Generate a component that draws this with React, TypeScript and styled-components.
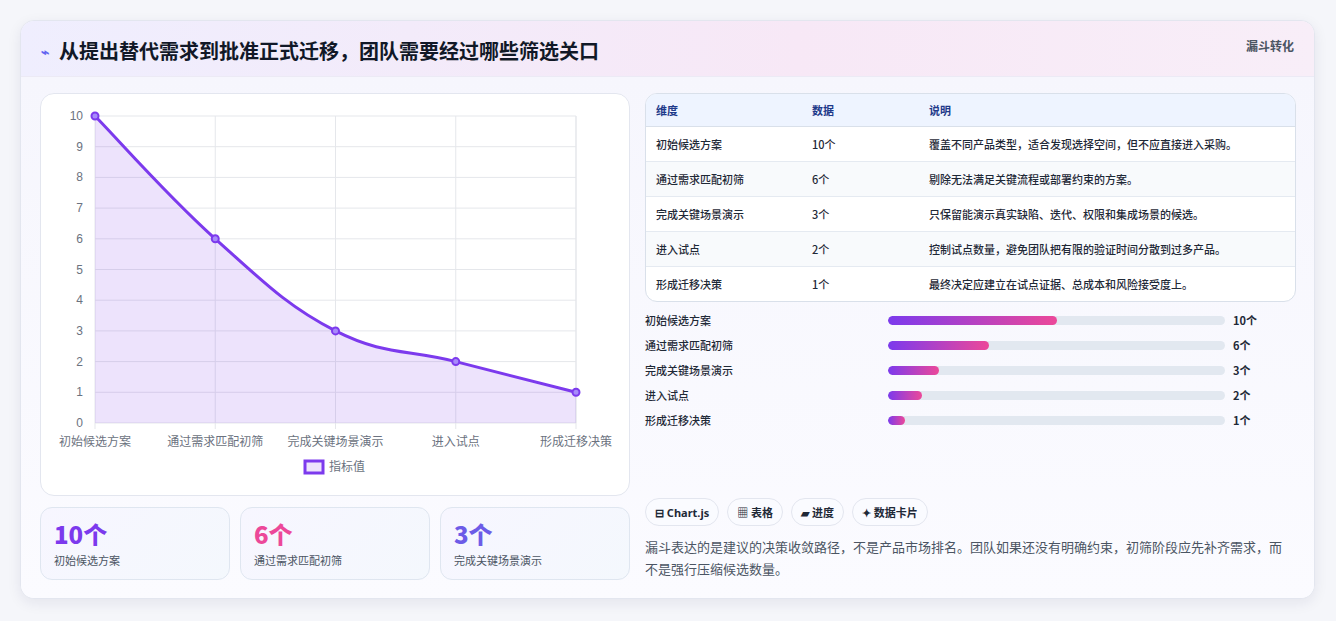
import React from 'react';
import styled, { createGlobalStyle } from 'styled-components';

const GlobalStyle = createGlobalStyle`
    body {
        margin: 0;
        background: #f5f6fa;
        font-family: 'Noto Sans', 'Noto Sans CJK SC', sans-serif;
    }
`;

type Stage = { name: string; value: number; note: string };

const stages: Stage[] = [
    { name: '初始候选方案', value: 10, note: '覆盖不同产品类型，适合发现选择空间，但不应直接进入采购。' },
    { name: '通过需求匹配初筛', value: 6, note: '剔除无法满足关键流程或部署约束的方案。' },
    { name: '完成关键场景演示', value: 3, note: '只保留能演示真实缺陷、迭代、权限和集成场景的候选。' },
    { name: '进入试点', value: 2, note: '控制试点数量，避免团队把有限的验证时间分散到过多产品。' },
    { name: '形成迁移决策', value: 1, note: '最终决定应建立在试点证据、总成本和风险接受度上。' },
];

const W = 590;
const H = 403;
const X0 = 54;
const X1 = 535;
const Y0 = 22;
const Y1 = 329;

const px = (i: number) => X0 + ((X1 - X0) / 4) * i;
const py = (v: number) => Y1 - ((Y1 - Y0) / 10) * v;

const linePath = () => {
    const pts = stages.map((s, i) => [px(i), py(s.value)]);
    let d = `M${pts[0][0]},${pts[0][1]}`;
    for (let i = 0; i < pts.length - 1; i++) {
        const p0 = pts[Math.max(i - 1, 0)];
        const p1 = pts[i];
        const p2 = pts[i + 1];
        const p3 = pts[Math.min(i + 2, pts.length - 1)];
        const t = 0.2;
        const c1 = [p1[0] + (p2[0] - p0[0]) * t, p1[1] + (p2[1] - p0[1]) * t];
        const c2 = [p2[0] - (p3[0] - p1[0]) * t, p2[1] - (p3[1] - p1[1]) * t];
        d += ` C${c1[0]},${c1[1]} ${c2[0]},${c2[1]} ${p2[0]},${p2[1]}`;
    }
    return d;
};

const LineChart = () => {
    const d = linePath();
    return (
        <svg width={W} height={H} viewBox={`0 0 ${W} ${H}`}>
            {Array.from({ length: 11 }).map((_, v) => (
                <g key={v}>
                    <line x1={X0} x2={X1} y1={py(v)} y2={py(v)} stroke="#e5e7eb" />
                    <text x={X0 - 12} y={py(v) + 4} textAnchor="end" fontSize="12" fill="#6b7280" fontFamily="Liberation Sans, sans-serif">{v}</text>
                </g>
            ))}
            {stages.map((s, i) => (
                <g key={s.name}>
                    <line x1={px(i)} x2={px(i)} y1={Y0} y2={Y1 + 6} stroke="#e5e7eb" />
                    <text x={px(i)} y={Y1 + 23} textAnchor="middle" fontSize="12" fill="#6b7280" fontFamily="Noto Sans CJK SC, sans-serif">{s.name}</text>
                </g>
            ))}
            <line x1={X1} x2={X1} y1={Y0} y2={Y1} stroke="#e5e7eb" />
            <path d={`${d} L${X1},${Y1} L${X0},${Y1} Z`} fill="rgba(124,58,237,0.14)" />
            <path d={d} fill="none" stroke="#7c3aed" strokeWidth="3" />
            {stages.map((s, i) => (
                <circle key={i} cx={px(i)} cy={py(s.value)} r="3.5" fill="#a78bfa" stroke="#7c3aed" strokeWidth="2" />
            ))}
            <rect x={264} y={367} width={18} height={12} fill="rgba(124,58,237,0.14)" stroke="#7c3aed" strokeWidth="3" />
            <text x={288} y={377} fontSize="12" fill="#6b7280" fontFamily="Noto Sans CJK SC, sans-serif">指标值</text>
        </svg>
    );
};

const App = () => (
    <>
        <GlobalStyle />
        <Page>
            <Card>
                <Header>
                    <Title><Bolt>⌁</Bolt>从提出替代需求到批准正式迁移，团队需要经过哪些筛选关口</Title>
                    <Tag>漏斗转化</Tag>
                </Header>
                <Body>
                    <LeftCol>
                        <ChartBox><LineChart /></ChartBox>
                        <Stats>
                            <Stat><StatValue color="#7c3aed">10个</StatValue><StatLabel>初始候选方案</StatLabel></Stat>
                            <Stat><StatValue color="#ec4899">6个</StatValue><StatLabel>通过需求匹配初筛</StatLabel></Stat>
                            <Stat><StatValue color="#6d5ce7">3个</StatValue><StatLabel>完成关键场景演示</StatLabel></Stat>
                        </Stats>
                    </LeftCol>
                    <RightCol>
                        <Table>
                            <colgroup>
                                <col style={{ width: 156 }} />
                                <col style={{ width: 117 }} />
                                <col />
                            </colgroup>
                            <thead>
                                <tr><Th>维度</Th><Th>数据</Th><Th>说明</Th></tr>
                            </thead>
                            <tbody>
                                {stages.map(s => (
                                    <tr key={s.name}><Td>{s.name}</Td><Td>{s.value}个</Td><Td>{s.note}</Td></tr>
                                ))}
                            </tbody>
                        </Table>
                        <Bars>
                            {stages.map(s => (
                                <BarRow key={s.name}>
                                    <BarLabel>{s.name}</BarLabel>
                                    <Track><Fill style={{ width: `${s.value * 5}%` }} /></Track>
                                    <BarValue>{s.value}个</BarValue>
                                </BarRow>
                            ))}
                        </Bars>
                        <Spacer />
                        <Chips>
                            <Chip>⊟ Chart.js</Chip>
                            <Chip>▦ 表格</Chip>
                            <Chip>▰ 进度</Chip>
                            <Chip>✦ 数据卡片</Chip>
                        </Chips>
                        <Note>漏斗表达的是建议的决策收敛路径，不是产品市场排名。团队如果还没有明确约束，初筛阶段应先补齐需求，而不是强行压缩候选数量。</Note>
                    </RightCol>
                </Body>
            </Card>
        </Page>
    </>
);

const Page = styled.div`
    padding: 20px 21px 20px 20px;
`;

const Card = styled.div`
    background: #fcfcff;
    border: 1px solid #e3e6ef;
    border-radius: 14px;
    box-shadow: 0 4px 14px rgba(30, 30, 80, 0.08);
    overflow: hidden;
`;

const Header = styled.div`
    height: 55px;
    display: flex;
    justify-content: space-between;
    align-items: flex-start;
    padding: 0 20px;
    background: linear-gradient(90deg, #efeefe 0%, #f7e8f6 60%, #f8eef8 100%);
    border-bottom: 1px solid #eceaf5;
`;

const Title = styled.h1`
    margin: 15px 0 0;
    font-size: 20px;
    font-weight: 700;
    color: #111827;
    font-family: 'Noto Sans CJK SC', sans-serif;
    display: flex;
    align-items: center;
`;

const Bolt = styled.span`
    color: #6366f1;
    font-size: 14px;
    margin-right: 10px;
`;

const Tag = styled.span`
    margin-top: 16px;
    font-size: 12px;
    font-weight: 700;
    color: #4b5563;
    font-family: 'Noto Sans CJK SC', sans-serif;
`;

const Body = styled.div`
    display: flex;
    gap: 15px;
    padding: 16px 18px 18px 19px;
    background: linear-gradient(180deg, #f6f6fd 0%, #fbfbff 100%);
`;

const LeftCol = styled.div`
    width: 590px;
    display: flex;
    flex-direction: column;
    gap: 11px;
`;

const ChartBox = styled.div`
    height: 403px;
    background: #fff;
    border: 1px solid #e3e6ef;
    border-radius: 14px;
    box-sizing: border-box;
    overflow: hidden;
`;

const Stats = styled.div`
    display: grid;
    grid-template-columns: repeat(3, 1fr);
    gap: 10px;
`;

const Stat = styled.div`
    height: 73px;
    box-sizing: border-box;
    padding: 12px 13px;
    background: linear-gradient(135deg, #f7f6ff, #f4f8fd);
    border: 1px solid #dfe6f0;
    border-radius: 12px;
`;

const StatValue = styled.div<{ color: string }>`
    font-size: 24px;
    font-weight: 800;
    line-height: 28px;
    color: ${p => p.color};
    font-family: 'Noto Sans CJK SC', sans-serif;
`;

const StatLabel = styled.div`
    margin-top: 4px;
    font-size: 11px;
    color: #4b5563;
    font-family: 'Noto Sans CJK SC', sans-serif;
`;

const RightCol = styled.div`
    flex: 1;
    display: flex;
    flex-direction: column;
`;

const Table = styled.table`
    width: 100%;
    table-layout: fixed;
    border-collapse: separate;
    border-spacing: 0;
    border: 1px solid #d9e0ea;
    border-radius: 12px;
    overflow: hidden;
    font-family: 'Noto Sans CJK SC', sans-serif;
    font-size: 11px;
    background: #fff;
`;

const Th = styled.th`
    height: 32px;
    text-align: left;
    padding: 0 10px;
    color: #1e3a8a;
    font-weight: 700;
    background: #eef4ff;
    border-bottom: 1px solid #d9e0ea;
`;

const Td = styled.td`
    height: 34px;
    padding: 0 10px;
    color: #1f2937;
    font-weight: 500;
    white-space: nowrap;
    border-bottom: 1px solid #e5eaf1;
    tr:nth-child(even) & { background: #f8fafc; }
    tr:last-child & { border-bottom: none; }
`;

const Bars = styled.div`
    margin-top: 10px;
    display: flex;
    flex-direction: column;
    gap: 9px;
`;

const BarRow = styled.div`
    display: grid;
    grid-template-columns: 243px 337px auto;
    align-items: center;
    height: 16px;
    font-family: 'Noto Sans CJK SC', sans-serif;
    font-size: 11px;
    color: #1f2937;
    font-weight: 500;
`;

const BarLabel = styled.span``;

const Track = styled.div`
    height: 9px;
    border-radius: 5px;
    background: #e2e8f0;
    overflow: hidden;
`;

const Fill = styled.div`
    height: 100%;
    border-radius: 5px;
    background: linear-gradient(90deg, #7c3aed, #ec4899);
`;

const BarValue = styled.span`
    padding-left: 8px;
    font-weight: 700;
`;

const Spacer = styled.div`
    flex: 1;
`;

const Chips = styled.div`
    display: flex;
    gap: 8px;
`;

const Chip = styled.span`
    height: 28px;
    box-sizing: border-box;
    padding: 0 9px;
    display: inline-flex;
    align-items: center;
    border: 1px solid #e3e6ef;
    border-radius: 14px;
    background: #fafbff;
    font-size: 11px;
    font-weight: 700;
    color: #1f2937;
    font-family: 'Noto Sans', 'Noto Sans CJK SC', sans-serif;
`;

const Note = styled.p`
    margin: 10px 0 0;
    padding-right: 8px;
    font-size: 13px;
    line-height: 22px;
    color: #4b5563;
    font-family: 'Noto Sans CJK SC', sans-serif;
`;

export default App;
